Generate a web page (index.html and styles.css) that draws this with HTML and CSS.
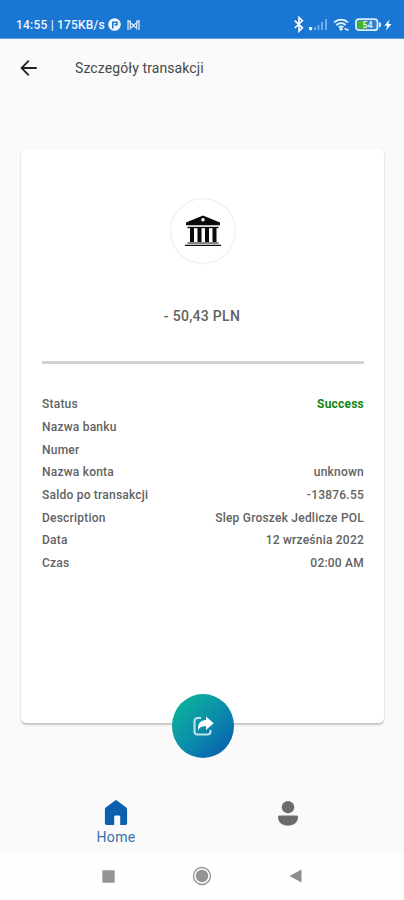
FILE: index.html
```html
<!DOCTYPE html>
<html lang="pl">
<head>
  <meta charset="UTF-8">
  <meta name="viewport" content="width=device-width, initial-scale=1">
  <title>Szczegóły transakcji</title>
  <link rel="stylesheet" href="styles.css">
</head>
<body>
  <div class="screen">
    <div class="status-bar">
      <span class="status-text">14:55 | 175KB/s</span>
      <svg class="status-app" width="13" height="13" viewBox="0 0 13 13">
        <circle cx="6.5" cy="6.5" r="6.3" fill="#f1f7fd"/>
        <path d="M4.8 10.5V4.3H9v2.4H6.5" fill="none" stroke="#1976d2" stroke-width="1.5"/>
      </svg>
      <svg class="status-mail" width="13" height="12" viewBox="0 0 13 12" fill="none" stroke="#d5e7f9" stroke-width="1.3">
        <path d="M1 1v10M12 1v10M3.3 1.5v9M9.7 1.5v9M1 1.5l5.5 4.8L12 1.5M3 9.5l3.5-2.7L10 9.5"/>
      </svg>
      <div class="status-icons">
        <svg width="10" height="17" viewBox="0 0 10 17" fill="none" stroke="#fff" stroke-width="1.6">
          <path d="M.8 4.6l7.6 7.2L5 15.2V1.5l3.4 3.3L.8 12"/>
        </svg>
        <svg class="signal" width="19" height="13" viewBox="0 0 19 13">
          <rect x="0" y="9" width="3.2" height="3.2" rx="1" fill="#fff"/>
          <path d="M6 12V9M9.5 12V7M13 12V4M17 12V1" stroke="#6eabe7" stroke-width="2"/>
        </svg>
        <svg class="wifi" width="17" height="13" viewBox="0 0 17 13" fill="none" stroke="#e8f2fc" stroke-width="1.8">
          <path d="M1 4.3a10.3 10.3 0 0 1 14 0M3.4 7a6.8 6.8 0 0 1 9.3 0M5.8 9.4a3.4 3.4 0 0 1 4.6 0"/>
          <path d="M8 9l2.3 2.3L8 13l-2-2z" fill="#e8f2fc" stroke="none"/>
          <path d="M11.5 10.5l4 1.8" stroke-width="1.5"/>
        </svg>
        <svg class="battery" width="27" height="14" viewBox="0 0 27 14">
          <rect x="1" y="1.2" width="21.5" height="11" rx="3" fill="#3681cf" stroke="#dcebf8" stroke-width="1.8"/>
          <path d="M24 4v5.5l2-1.2V5.2z" fill="#dcebf8"/>
          <path d="M3 3h8.5v7.5H3z" fill="#42b72b"/>
          <text class="battery-level" x="7.5" y="10.2">54</text>
        </svg>
        <svg class="bolt" width="8" height="12" viewBox="0 0 8 12" fill="#fff">
          <path d="M5.5.5L.3 6.7h3L2 11.5l5.5-6.4H4.4z"/>
        </svg>
      </div>
    </div>

    <div class="app-bar">
      <svg width="18" height="18" viewBox="0 0 18 18" fill="none" stroke="#202020" stroke-width="1.8">
        <path d="M16.8 9H2M8.8 1.6L1.6 9l7.2 7.4"/>
      </svg>
      <h1 class="app-title">Szczegóły transakcji</h1>
    </div>

    <div class="card">
      <div class="bank-badge">
        <svg width="38" height="32" viewBox="0 0 38 32" fill="#0b0b0b">
          <path d="M19 .5L36 7.5v2.8H2V7.5z"/>
          <path d="M3.5 11.8h31v1.4h-31z"/>
          <path d="M6 13h4v14H6zM13.5 13h4v14h-4zM21 13h4v14h-4zM28.5 13h4v14h-4z"/>
          <path d="M3.5 27.5h31v1h-31zM1 29.7h36v1.3H1z"/>
          <circle cx="19" cy="4.8" r="1.8" fill="#fff"/>
        </svg>
      </div>
      <div class="amount">- 50,43 PLN</div>
      <div class="details">
        <div class="row"><span>Status</span><span class="success">Success</span></div>
        <div class="row"><span>Nazwa banku</span></div>
        <div class="row"><span>Numer</span></div>
        <div class="row"><span>Nazwa konta</span><span>unknown</span></div>
        <div class="row"><span>Saldo po transakcji</span><span>-13876.55</span></div>
        <div class="row"><span>Description</span><span>Slep Groszek Jedlicze POL</span></div>
        <div class="row"><span>Data</span><span>12 września 2022</span></div>
        <div class="row"><span>Czas</span><span>02:00 AM</span></div>
      </div>
      <div class="share-button">
        <svg width="21" height="20" viewBox="0 0 21 20">
          <path d="M8 2H4.500A3 3 0 0 0 1.500 5v10.500a3 3 0 0 0 3 3h10a3 3 0 0 0 3-3V14" fill="none" stroke="#c4e4ee" stroke-width="2"/>
          <path d="M13 .5l7.700 6.700L13 14v-3.700c-4.500-.2-6.500.9-7.800 4.200C4.300 8.500 7 4.300 13 4z" fill="#fff"/>
        </svg>
      </div>
    </div>

    <div class="tab-bar">
      <div class="tab">
        <svg width="24" height="26" viewBox="0 0 24 26" fill="#0a5fae">
          <path d="M10.4.9a2.6 2.6 0 0 1 3.2 0l8.6 6.7c.6.5.9 1.1.9 1.9v13.8c0 1-.7 1.7-1.7 1.7h-5.200V17c0-1-.5-1.500-1.500-1.500h-3c-1 0-1.500.5-1.500 1.500v8H2.6C1.6 25 .9 24.300.9 23.300V9.500c0-.8.3-1.400.9-1.900z"/>
        </svg>
        <span>Home</span>
      </div>
      <div class="tab">
        <svg width="22" height="26" viewBox="0 0 22 26" fill="#6b6b6b">
          <circle cx="11" cy="7.2" r="6.2"/>
          <path d="M2.7 15.5h16.6c1 0 1.7.7 1.7 1.7C21 22 17 25.500 11 25.500S1 22 1 17.200c0-1 .7-1.700 1.700-1.700z"/>
        </svg>
      </div>
    </div>

    <div class="system-nav">
      <svg width="13" height="13" viewBox="0 0 13 13" fill="#949494">
        <rect x=".3" y=".3" width="12.4" height="12.4" rx=".8"/>
      </svg>
      <svg width="20" height="20" viewBox="0 0 20 20">
        <circle cx="10" cy="10" r="8.5" fill="none" stroke="#949494" stroke-width="1.3"/>
        <circle cx="10" cy="10" r="6.2" fill="#949494"/>
      </svg>
      <svg width="13" height="14" viewBox="0 0 13 14" fill="#8c8c8c">
        <path d="M12.5.5v13L.5 7z"/>
      </svg>
    </div>
  </div>
</body>
</html>
```
FILE: styles.css
```css
:root {
  --primary: #1976d2;
  --background: #fafafa;
  --surface: #fff;
  --text: #626262;
  --success: #118611;
}

* {
  box-sizing: border-box;
}

body {
  margin: 0;
  background: var(--background);
  color: var(--text);
  font-family: Roboto, sans-serif;
}

.screen {
  width: 404px;
  height: 900px;
  display: flex;
  flex-direction: column;
  overflow: hidden;
}

.status-bar {
  height: 39px;
  padding: 11px 12px 0 16px;
  display: flex;
  align-items: center;
  background: var(--primary);
  border-bottom: 1px solid #5f9fdd;
  color: #f1f7fd;
}

.status-text {
  width: 89px;
  font-size: 12px;
  font-weight: 500;
  letter-spacing: 0.2px;
  white-space: nowrap;
}

.status-app {
  margin-left: 3px;
}

.status-mail {
  margin-left: 6px;
}

.status-icons {
  margin-left: auto;
  display: flex;
  align-items: center;
}

.signal,
.wifi,
.battery {
  margin-left: 5px;
}

.battery-level {
  font-size: 9px;
  font-weight: 500;
  fill: #e6f2e9;
}

.bolt {
  margin-left: 2px;
}

.app-bar {
  height: 58px;
  padding-left: 20px;
  display: flex;
  align-items: center;
}

.app-title {
  margin: 0 0 0 37px;
  color: #484848;
  font-size: 14px;
  font-weight: 400;
  line-height: 18px;
  letter-spacing: 0.1px;
}

.card {
  width: 363px;
  height: 574px;
  margin: 52px 0 0 21px;
  padding: 50px 20px 0 21px;
  display: flex;
  flex-direction: column;
  flex-shrink: 0;
  background: var(--surface);
  border-radius: 5px;
  box-shadow: 0 2px 2px rgba(0, 0, 0, 0.2), 0 0 2px rgba(0, 0, 0, 0.07);
}

.bank-badge {
  width: 64px;
  height: 64px;
  display: flex;
  align-items: center;
  justify-content: center;
  align-self: center;
  flex-shrink: 0;
  border-radius: 50%;
  background: var(--surface);
  box-shadow: 0 0 2px rgba(0, 0, 0, 0.2);
}

.amount {
  height: 101px;
  padding: 44px 2px 0 0;
  flex-shrink: 0;
  border-bottom: 3px solid #d3d3d3;
  font-size: 14px;
  font-weight: 500;
  line-height: 18px;
  letter-spacing: 0.3px;
  text-align: center;
}

.details {
  height: 330px;
  padding-top: 29px;
  flex-shrink: 0;
}

.row {
  height: 22.65px;
  display: flex;
  align-items: center;
  justify-content: space-between;
  font-size: 12px;
  font-weight: 500;
  letter-spacing: 0.22px;
}

.success {
  color: var(--success);
  font-weight: 700;
}

/* hangs over the bottom edge of the card */
.share-button {
  width: 62px;
  height: 64px;
  display: flex;
  align-items: center;
  justify-content: center;
  align-self: center;
  flex-shrink: 0;
  border-radius: 50%;
  background: linear-gradient(135deg, #0bb29b 10%, #0b8faa 50%, #0861b0 90%);
}

.tab-bar {
  height: 130px;
  padding: 77px 30px 0;
  display: flex;
}

.tab {
  flex: 1;
  display: flex;
  flex-direction: column;
  align-items: center;
}

.tab span {
  margin-top: 3px;
  color: #3471ad;
  font-size: 14px;
  line-height: 16px;
  letter-spacing: 0.3px;
}

.system-nav {
  flex: 1;
  padding: 0 102px 1px;
  display: flex;
  align-items: center;
  justify-content: space-between;
  background: #fefefe;
}
```
